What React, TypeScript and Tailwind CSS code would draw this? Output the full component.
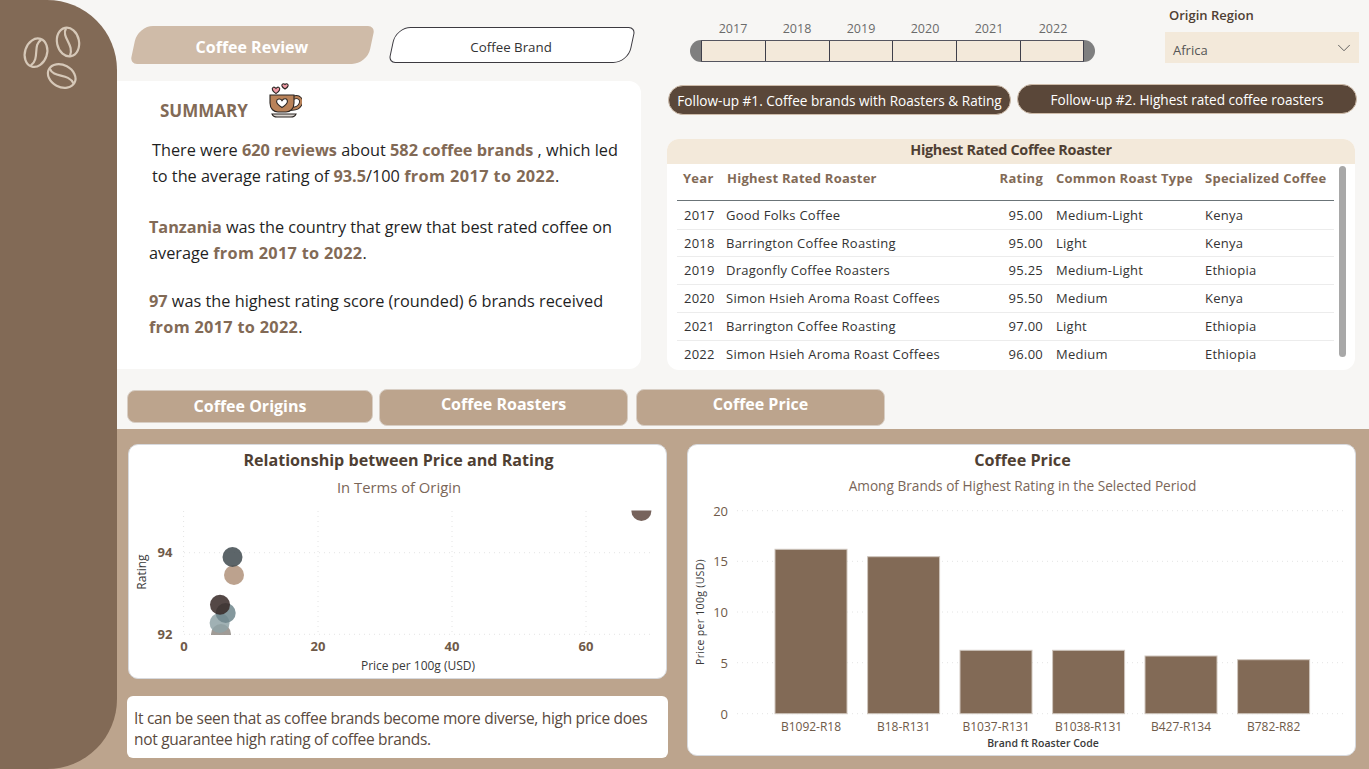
import { ChevronDown } from "lucide-react";

const years = ["2017", "2018", "2019", "2020", "2021", "2022"];

const roasters = [
    { year: 2017, name: "Good Folks Coffee", rating: "95.00", roast: "Medium-Light", origin: "Kenya" },
    { year: 2018, name: "Barrington Coffee Roasting", rating: "95.00", roast: "Light", origin: "Kenya" },
    { year: 2019, name: "Dragonfly Coffee Roasters", rating: "95.25", roast: "Medium-Light", origin: "Ethiopia" },
    { year: 2020, name: "Simon Hsieh Aroma Roast Coffees", rating: "95.50", roast: "Medium", origin: "Kenya" },
    { year: 2021, name: "Barrington Coffee Roasting", rating: "97.00", roast: "Light", origin: "Ethiopia" },
    { year: 2022, name: "Simon Hsieh Aroma Roast Coffees", rating: "96.00", roast: "Medium", origin: "Ethiopia" },
];

const bubbles = [
    { cx: 221, cy: 634, fill: "#8f8a84" },
    { cx: 219.6, cy: 623, fill: "#8fa3a7" },
    { cx: 225.7, cy: 613, fill: "#6f868c" },
    { cx: 220, cy: 604.7, fill: "#362826" },
    { cx: 234, cy: 575, fill: "#b0927a" },
    { cx: 232.5, cy: 557, fill: "#3f4a4f" },
    { cx: 641.4, cy: 511, fill: "#5f4840" },
];

const bars = [
    { label: "B1092-R18", x: 775, top: 549.3 },
    { label: "B18-R131", x: 867.6, top: 556.7 },
    { label: "B1037-R131", x: 960, top: 650.3 },
    { label: "B1038-R131", x: 1052.6, top: 650.3 },
    { label: "B427-R134", x: 1145, top: 656 },
    { label: "B782-R82", x: 1237.6, top: 659.7 },
];

function Bean({ x, y, angle }: { x: number; y: number; angle: number }) {
    return (
        <g transform={`translate(${x} ${y}) rotate(${angle})`}>
            <ellipse rx="11" ry="14.5" />
            <path d="M1 -14 C -6 -6 6 4 -1 14" />
        </g>
    );
}

function BeansIcon() {
    return (
        <svg width="70" height="70" viewBox="20 24 70 70" fill="none" stroke="#d6c8b8" strokeWidth="2.2">
            <Bean x={36} y={52.7} angle={18} />
            <Bean x={68} y={42} angle={-12} />
            <Bean x={61.7} y={76} angle={-62} />
        </svg>
    );
}

function CupIcon() {
    return (
        <svg width="34" height="35" viewBox="0 0 34 35" stroke="#2b2522" strokeWidth="1.1">
            <path d="M8 5.5 C6 3 3.5 4.5 4.5 7 C5 8.5 7 9.8 8 10.5 C9 9.8 11 8.5 11.5 7 C12.5 4.5 10 3 8 5.5Z" fill="#ef9aa5" />
            <path d="M17 1.5 C15.5 0 13.5 1 14 3 C14.4 4.4 16 5.4 17 6 C18 5.4 19.6 4.4 20 3 C20.5 1 18.5 0 17 1.5Z" fill="#ef9aa5" />
            <path d="M25 15 C31 12 35 17 32 22 C30 25.5 26 26 22 25.5" fill="none" stroke="#2b2522" strokeWidth="4" />
            <path d="M25 15 C31 12 35 17 32 22 C30 25.5 26 26 22 25.5" fill="none" stroke="#b98259" strokeWidth="2.2" />
            <path d="M2 12 H26 V20 C26 26 22 29 18 29 H10 C6 29 2 26 2 20Z" fill="#b98259" />
            <path d="M14 24.5 C11 22.5 8.6 20.8 8.6 18.4 C8.6 15.8 12.4 15 14 17.6 C15.6 15 19.4 15 19.4 18.4 C19.4 20.8 17 22.5 14 24.5Z" fill="#fff" />
            <path d="M4 31 H28 C27 33.5 25 34 23 34 H9 C7 34 5 33.5 4 31Z" fill="#d9d4cf" />
        </svg>
    );
}

function ScatterChart() {
    const gridX = [183.6, 318, 452, 586];
    const gridY = [552.7, 634.3];
    return (
        <svg width="537" height="181" viewBox="129 497 537 181" className="block">
            <defs>
                <clipPath id="plot">
                    <rect x="170" y="510.5" width="490" height="124.5" />
                </clipPath>
            </defs>
            {gridX.map((x) => (
                <line key={x} x1={x} x2={x} y1="511" y2="634" stroke="#e4e4e4" strokeDasharray="1 4" />
            ))}
            {gridY.map((y) => (
                <line key={y} x1="184" x2="650" y1={y} y2={y} stroke="#e4e4e4" strokeDasharray="1 4" />
            ))}
            <g clipPath="url(#plot)">
                {bubbles.map((b) => (
                    <circle key={b.fill} cx={b.cx} cy={b.cy} r="10" fill={b.fill} fillOpacity="0.85" />
                ))}
            </g>
            <g fill="#6f5a49" fontSize="13" fontWeight="700" textAnchor="middle">
                <text x="165" y="557">94</text>
                <text x="165" y="639">92</text>
                <text x="184" y="651">0</text>
                <text x="318" y="651">20</text>
                <text x="452" y="651">40</text>
                <text x="586" y="651">60</text>
            </g>
            <text x="418" y="670" fontSize="12" fill="#3a3a3a" textAnchor="middle">Price per 100g (USD)</text>
            <text transform="translate(146 572) rotate(-90)" fontSize="12" fill="#3a3a3a" textAnchor="middle">Rating</text>
        </svg>
    );
}

function PriceChart() {
    const ticks = [
        { label: "20", y: 510.7 },
        { label: "15", y: 561.3 },
        { label: "10", y: 612 },
        { label: "5", y: 662.7 },
        { label: "0", y: 713.7 },
    ];
    return (
        <svg width="667" height="258" viewBox="688 497 667 258" className="block">
            {ticks.map((t) => (
                <g key={t.label}>
                    <line x1="737" x2="1343" y1={t.y} y2={t.y} stroke="#e4e4e4" strokeDasharray="1 4" />
                    <text x="728" y={t.y + 5} fontSize="13" fill="#6f5a49" textAnchor="end">{t.label}</text>
                </g>
            ))}
            {bars.map((b) => (
                <g key={b.label}>
                    <rect x={b.x} y={b.top} width="72" height={713.7 - b.top} fill="#826a56" stroke="#cfc6bd" strokeWidth="1" />
                    <text x={b.x + 36} y="731" fontSize="12" fill="#6f5a49" textAnchor="middle">{b.label}</text>
                </g>
            ))}
            <text x="1043" y="747" fontSize="10.5" fontWeight="600" fill="#3a3a3a" textAnchor="middle">Brand ft Roaster Code</text>
            <text transform="translate(704 612) rotate(-90)" fontSize="10.5" fontWeight="500" letterSpacing="0.3" fill="#3a3a3a" textAnchor="middle">Price per 100g (USD)</text>
        </svg>
    );
}

export default function App() {
    return (
        <div className="flex h-[769px] w-[1369px] overflow-hidden bg-[#f7f6f4] font-['Open_Sans','Noto_Sans',sans-serif] text-[#2b2b2b]">
            {/* sidebar sits on a split background so the corners show the right colour */}
            <aside className="h-full w-[117px] shrink-0 bg-[linear-gradient(#f7f6f4_50%,#bca48d_50%)]">
                <div className="h-full rounded-r-[70px] bg-[#826a56] pl-[20px] pt-[24px]">
                    <BeansIcon />
                </div>
            </aside>

            <main className="flex w-[1252px] flex-col">
                <section className="flex h-[429px] flex-col">
                    <div className="flex h-[370px]">
                        {/* left column */}
                        <div className="flex w-[524px] flex-col">
                            <div className="flex h-[81px] gap-[21px] pl-[17px] pt-[26px]">
                                <div className="flex h-[38px] w-[237px] -skew-x-12 items-center justify-center rounded-bl-[7px] rounded-br-[15px] rounded-tl-[15px] rounded-tr-[7px] bg-[#cfbba8] pt-[4px]">
                                    <span className="skew-x-12 text-[16px] font-bold text-white">Coffee Review</span>
                                </div>
                                <div className="mt-[1px] flex h-[36px] w-[240px] -skew-x-12 items-center justify-center rounded-bl-[7px] rounded-br-[15px] rounded-tl-[15px] rounded-tr-[7px] border border-[#3c3a40] bg-white pt-[5px]">
                                    <span className="skew-x-12 text-[13.3px] text-[#333]">Coffee Brand</span>
                                </div>
                            </div>
                            <div className="h-[288px] rounded-r-xl bg-white">
                                <div className="flex h-[37px] items-end pl-[43px]">
                                    <span className="-mb-[4px] text-[17px] font-bold leading-[22px] text-[#826a56]">SUMMARY</span>
                                    <span className="ml-[20px]"><CupIcon /></span>
                                </div>
                                <div className="text-[16.3px] leading-[26px] text-[#1f1f1f]">
                                    <p className="mt-[19px] pl-[35px]">
                                        There were <b className="text-[#826a56]">620 reviews</b> about <b className="text-[#826a56]">582 coffee brands</b> , which led<br />
                                        to the average rating of <b className="text-[#826a56]">93.5</b>/100 <b className="tracking-[0.4px] text-[#826a56]">from 2017 to 2022</b>.
                                    </p>
                                    <p className="mt-[25px] pl-[32px]">
                                        <span className="tracking-[-0.06px]"><b className="text-[#826a56]">Tanzania</b> was the country that grew that best rated coffee on</span><br />
                                        average <b className="tracking-[0.3px] text-[#826a56]">from 2017 to 2022</b>.
                                    </p>
                                    <p className="mt-[22px] pl-[32px]">
                                        <b className="text-[#826a56]">97</b> was the highest rating score (rounded) 6 brands received<br />
                                        <b className="tracking-[0.3px] text-[#826a56]">from 2017 to 2022</b>.
                                    </p>
                                </div>
                            </div>
                        </div>

                        {/* right column */}
                        <div className="ml-[26px] flex w-[692px] flex-col">
                            <div className="flex h-[84px]">
                                <div className="ml-[23px] w-[405px] pt-[21px]">
                                    <div className="flex h-[16px] pl-[11px]">
                                        {years.map((y) => (
                                            <span key={y} className="w-[64px] text-center text-[12.5px] leading-[16px] text-[#6b6b6b]">{y}</span>
                                        ))}
                                    </div>
                                    <div className="mt-[3px] h-[22px] rounded-full bg-[#7f7f7f] px-[11px]">
                                        <div className="flex h-full border-y border-y-[#55555f] bg-[#f3e9da]">
                                            {years.map((y) => (
                                                <div key={y} className="h-full w-[64px] border-l border-[#3f3f4a] last:border-r" />
                                            ))}
                                        </div>
                                    </div>
                                </div>
                                <div className="ml-[70px] w-[194px] pt-[7px]">
                                    <div className="pl-[4px] text-[13px] font-semibold leading-[17px] text-[#4f3f33]">Origin Region</div>
                                    <div className="mt-[8px] flex h-[31px] items-center justify-between bg-[#f3e9da] pl-[8px] pr-[4px] text-[13px] text-[#555]">
                                        <span className="pt-[7px]">Africa</span>
                                        <ChevronDown size={22} strokeWidth={1} className="text-[#555]" />
                                    </div>
                                </div>
                            </div>

                            <div className="flex items-start gap-[6px] pl-[1px]">
                                <button className="mt-[1px] h-[30px] w-[343px] rounded-full border border-[#cdbba9] bg-[#5a4739] pt-[2px] text-[13.6px] text-white">Follow-up #1. Coffee brands with Roasters &amp; Rating</button>
                                <button className="h-[30px] w-[340px] rounded-full border border-[#cdbba9] bg-[#5a4739] pt-[2px] text-[13.6px] text-white">Follow-up #2. Highest rated coffee roasters</button>
                            </div>

                            <div className="mt-[24px] h-[232px] w-[688px] overflow-hidden rounded-xl bg-white">
                                <div className="h-[25px] bg-[#f3e9da] text-center text-[14.4px] font-bold leading-[22px] tracking-[-0.3px] text-[#4f3f33]">Highest Rated Coffee Roaster</div>
                                <div className="relative ml-[10px] w-[657px]">
                                    <div className="grid h-[37px] grid-cols-[44px_254px_75px_149px_135px] items-start border-b border-[#6b7478] pt-[5px] text-[13px] font-bold leading-[18px] tracking-[0.25px] text-[#826a56]">
                                        <span className="pl-[6px]">Year</span>
                                        <span className="pl-[6px]">Highest Rated Roaster</span>
                                        <span className="pr-[7px] text-right">Rating</span>
                                        <span className="pl-[6px]">Common Roast Type</span>
                                        <span className="pl-[6px]">Specialized Coffee</span>
                                    </div>
                                    <div>
                                        {roasters.map((r) => (
                                            <div key={r.year} className="grid h-[27.8px] grid-cols-[44px_254px_75px_149px_135px] items-center border-b border-[#ececec] pt-[1px] text-[13px] tracking-[0.25px] text-[#333] first:h-[28.8px] first:pt-[2px] last:border-b-0">
                                                <span className="pl-[7px]">{r.year}</span>
                                                <span className="pl-[5px]">{r.name}</span>
                                                <span className="pr-[7px] text-right">{r.rating}</span>
                                                <span className="pl-[6px]">{r.roast}</span>
                                                <span className="pl-[6px]">{r.origin}</span>
                                            </div>
                                        ))}
                                    </div>
                                    <div className="absolute left-[662px] top-[2px] h-[191px] w-[7px] rounded-full bg-[#a8a8a8]" />
                                </div>
                            </div>
                        </div>
                    </div>

                    <div className="flex items-start pl-[10px] pt-[19px] text-[16px] font-bold text-white">
                        <div className="mt-[1px] flex h-[33px] w-[246px] items-center justify-center rounded-lg border border-[#d8cec4] bg-[#bca48d] pb-[2px]">Coffee Origins</div>
                        <div className="ml-[6px] flex h-[37px] w-[249px] items-center justify-center rounded-lg border border-[#d8cec4] bg-[#bca48d] pb-[7px]">Coffee Roasters</div>
                        <div className="ml-[8px] flex h-[37px] w-[249px] items-center justify-center rounded-lg border border-[#d8cec4] bg-[#bca48d] pb-[7px]">Coffee Price</div>
                    </div>
                </section>

                <section className="flex h-[340px] bg-[#bca48d] pl-[10px] pt-[15px]">
                    <div className="flex w-[541px] flex-col">
                        <div className="ml-[1px] h-[235px] w-[539px] overflow-hidden rounded-[10px] border border-[#d7d9dd] bg-white pt-[4px] text-center">
                            <div className="pl-[2px] text-[16.1px] font-bold leading-[22px] text-[#4f3f33]">Relationship between Price and Rating</div>
                            <div className="mt-[6px] pl-[3px] text-[14.8px] leading-[20px] text-[#7a6658]">In Terms of Origin</div>
                            <ScatterChart />
                        </div>
                        <div className="mt-[17px] h-[62px] rounded-[6px] bg-white px-[7px] pt-[12px] text-[15.5px] leading-[21px] tracking-[-0.31px] text-[#5a4a40]">
                            It can be seen that as coffee brands become more diverse, high price does<br />
                            not guarantee high rating of coffee brands.
                        </div>
                    </div>
                    <div className="ml-[19px] h-[312px] w-[669px] overflow-hidden rounded-[10px] border border-[#d7d9dd] bg-white pt-[4px] text-center">
                        <div className="pl-[2px] text-[16.2px] font-bold leading-[22px] text-[#4f3f33]">Coffee Price</div>
                        <div className="mt-[5px] pl-[2px] text-[13.65px] leading-[20px] text-[#7a6658]">Among Brands of Highest Rating in the Selected Period</div>
                        <div className="mt-[1px]"><PriceChart /></div>
                    </div>
                </section>
            </main>
        </div>
    );
}
